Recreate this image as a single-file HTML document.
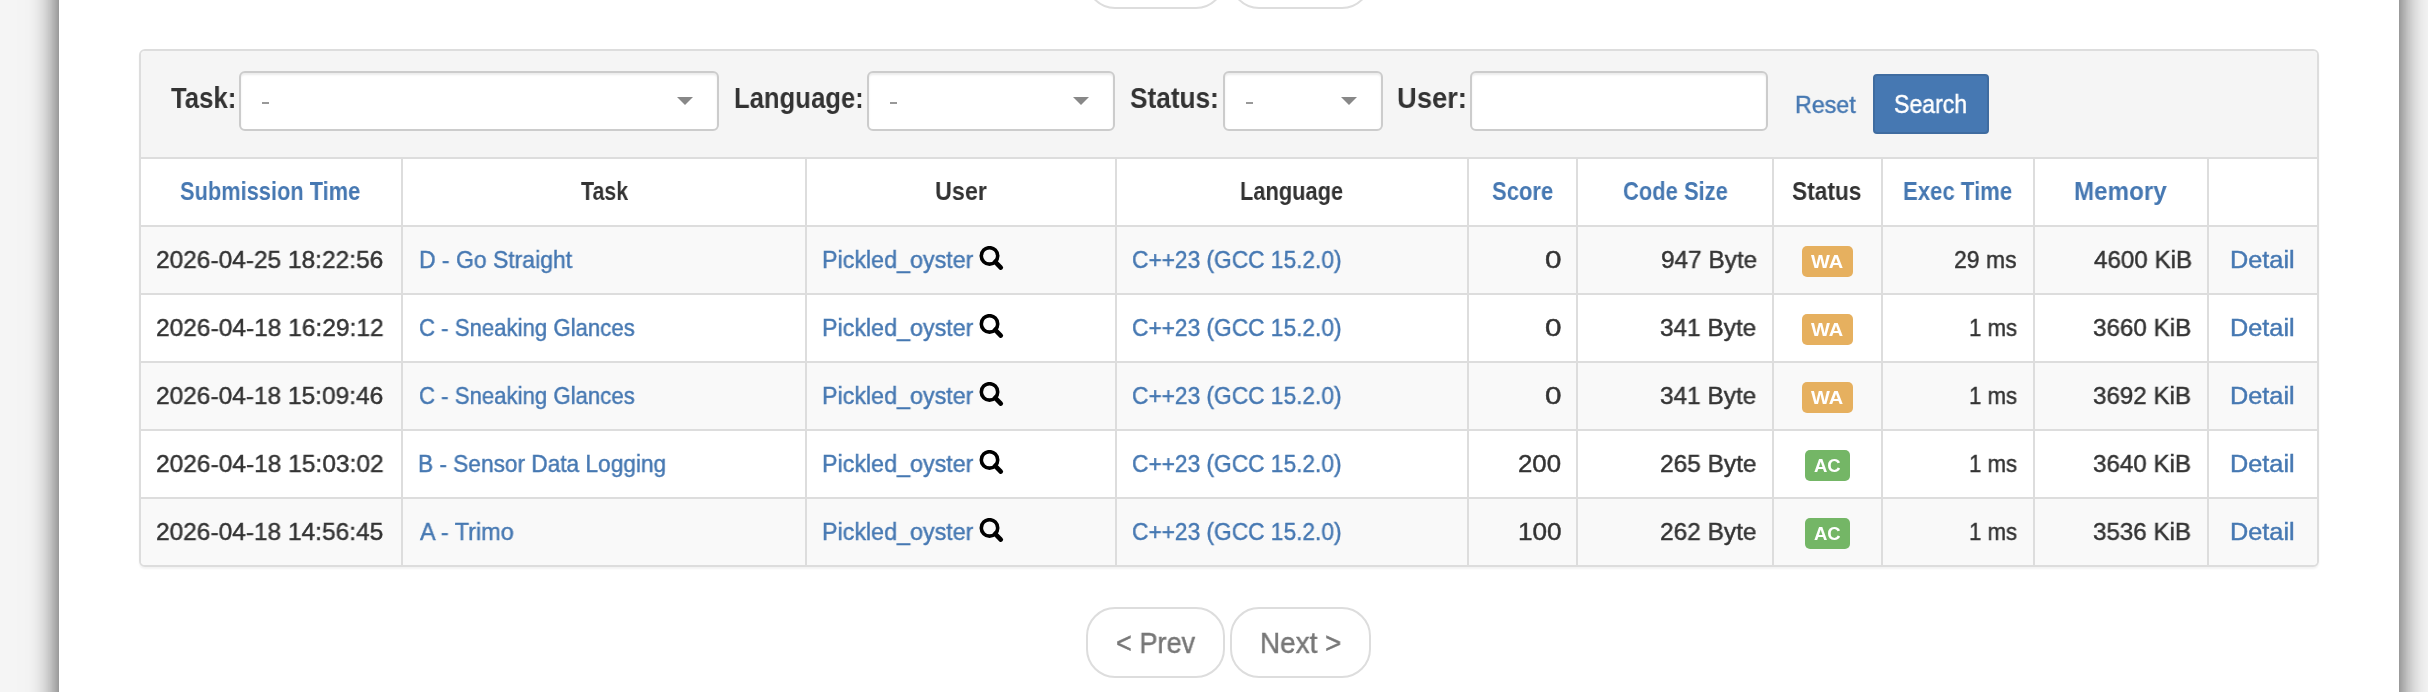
<!DOCTYPE html>
<html><head><meta charset="utf-8"><style>
html,body{margin:0;padding:0}
body{width:2428px;height:692px;overflow:hidden;position:relative;background:#f5f5f5;font-family:"Liberation Sans",sans-serif}
.cont{position:absolute;left:59px;top:-200px;width:2340px;height:1200px;background:#fff;box-shadow:0 0 28px rgba(0,0,0,0.75)}
.panel{position:absolute;left:139px;top:49px;width:2180px;height:518px;box-sizing:border-box;border:2px solid #ddd;border-radius:6px;background:#fff;box-shadow:0 2px 2px rgba(0,0,0,0.05);overflow:hidden}
.ph{position:absolute;left:0;top:0;right:0;height:106px;background:#f5f5f5}
.stripe{position:absolute;left:0;width:2176px;height:66px;background:#f9f9f9}
.stripe:last-of-type{}
.hl{position:absolute;left:0;width:2176px;height:2px;background:#ddd}
.vl{position:absolute;top:108px;width:2px;height:406px;background:#ddd}
.sel{position:absolute;top:71px;height:60px;box-sizing:border-box;border:2px solid #ccc;border-radius:6px;background:#fff;box-shadow:inset 0 2px 2px rgba(0,0,0,0.075)}
.arrow{position:absolute;top:97px;width:0;height:0;border-left:8px solid transparent;border-right:8px solid transparent;border-top:8px solid #888}
.dash{position:absolute;top:101.5px;width:7px;height:2.4px;background:#999}
.btn{position:absolute;left:1873px;top:74px;width:116px;height:60px;box-sizing:border-box;background:#4678b2;border:2px solid #3f6ca0;border-radius:4px}
.badge{position:absolute;height:31px;border-radius:5px}
.mag{position:absolute;left:979px}
.pgb{position:absolute;height:71px;box-sizing:border-box;border:2px solid #ddd;border-radius:29px;background:#fff}
.tx{position:absolute;white-space:nowrap;line-height:1;transform-origin:0 0;will-change:transform}
</style></head><body>
<div class="cont"></div>
<div class="pgb" style="left:1086px;top:-62px;width:139px"></div>
<div class="pgb" style="left:1230px;top:-62px;width:141px"></div>
<div class="panel"><div class="ph"></div><div class="stripe" style="top:176px"></div><div class="stripe" style="top:312px"></div><div class="stripe" style="top:448px"></div><div class="hl" style="top:106px"></div><div class="hl" style="top:174px"></div><div class="hl" style="top:242px"></div><div class="hl" style="top:310px"></div><div class="hl" style="top:378px"></div><div class="hl" style="top:446px"></div><div class="vl" style="left:260px"></div><div class="vl" style="left:664px"></div><div class="vl" style="left:974px"></div><div class="vl" style="left:1326px"></div><div class="vl" style="left:1435px"></div><div class="vl" style="left:1631px"></div><div class="vl" style="left:1740px"></div><div class="vl" style="left:1892px"></div><div class="vl" style="left:2066px"></div></div>
<div class="sel" style="left:239px;width:480px"></div>
<div class="arrow" style="left:677px"></div>
<div class="dash" style="left:262px"></div>
<div class="sel" style="left:867px;width:248px"></div>
<div class="arrow" style="left:1073px"></div>
<div class="dash" style="left:890px"></div>
<div class="sel" style="left:1223px;width:160px"></div>
<div class="arrow" style="left:1341px"></div>
<div class="dash" style="left:1246px"></div>
<div class="sel" style="left:1470px;width:298px"></div>
<div class="btn"></div>
<div class="badge" style="left:1802px;width:51px;top:246px;background:#e6b05f"></div>
<svg class="mag" style="top:246px" width="26" height="26" viewBox="0 0 26 26"><circle cx="10.5" cy="9.9" r="8.2" fill="none" stroke="#000" stroke-width="3.6"/><path d="M16.2 15.8 L21.8 21.6" stroke="#000" stroke-width="4.6" stroke-linecap="round"/></svg>
<div class="badge" style="left:1802px;width:51px;top:314px;background:#e6b05f"></div>
<svg class="mag" style="top:314px" width="26" height="26" viewBox="0 0 26 26"><circle cx="10.5" cy="9.9" r="8.2" fill="none" stroke="#000" stroke-width="3.6"/><path d="M16.2 15.8 L21.8 21.6" stroke="#000" stroke-width="4.6" stroke-linecap="round"/></svg>
<div class="badge" style="left:1802px;width:51px;top:382px;background:#e6b05f"></div>
<svg class="mag" style="top:382px" width="26" height="26" viewBox="0 0 26 26"><circle cx="10.5" cy="9.9" r="8.2" fill="none" stroke="#000" stroke-width="3.6"/><path d="M16.2 15.8 L21.8 21.6" stroke="#000" stroke-width="4.6" stroke-linecap="round"/></svg>
<div class="badge" style="left:1805px;width:45px;top:450px;background:#74b666"></div>
<svg class="mag" style="top:450px" width="26" height="26" viewBox="0 0 26 26"><circle cx="10.5" cy="9.9" r="8.2" fill="none" stroke="#000" stroke-width="3.6"/><path d="M16.2 15.8 L21.8 21.6" stroke="#000" stroke-width="4.6" stroke-linecap="round"/></svg>
<div class="badge" style="left:1805px;width:45px;top:518px;background:#74b666"></div>
<svg class="mag" style="top:518px" width="26" height="26" viewBox="0 0 26 26"><circle cx="10.5" cy="9.9" r="8.2" fill="none" stroke="#000" stroke-width="3.6"/><path d="M16.2 15.8 L21.8 21.6" stroke="#000" stroke-width="4.6" stroke-linecap="round"/></svg>
<div class="pgb" style="left:1086px;top:607px;width:139px"></div>
<div class="pgb" style="left:1230px;top:607px;width:141px"></div>
<span id="t0" class="tx" style="left:170.58px;top:83.00px;font-size:30.3px;font-weight:700;color:#333333;transform:scaleX(0.8493)">Task:</span>
<span id="t1" class="tx" style="left:733.84px;top:83.00px;font-size:30.3px;font-weight:700;color:#333333;transform:scaleX(0.8471)">Language:</span>
<span id="t2" class="tx" style="left:1129.90px;top:83.00px;font-size:30.3px;font-weight:700;color:#333333;transform:scaleX(0.8653)">Status:</span>
<span id="t3" class="tx" style="left:1397.06px;top:83.00px;font-size:30.3px;font-weight:700;color:#333333;transform:scaleX(0.9038)">User:</span>
<span id="t4" class="tx" style="left:1794.86px;top:93.00px;font-size:24.5px;font-weight:400;color:#4678b2;transform:scaleX(0.9485);-webkit-text-stroke:0.45px #4678b2">Reset</span>
<span id="t5" class="tx" style="left:1893.81px;top:92.00px;font-size:25px;font-weight:400;color:#ffffff;transform:scaleX(0.9226);-webkit-text-stroke:0.45px #ffffff">Search</span>
<span id="t6" class="tx" style="left:180.37px;top:179.00px;font-size:25px;font-weight:700;color:#4678b2;transform:scaleX(0.8722)">Submission Time</span>
<span id="t7" class="tx" style="left:580.57px;top:179.00px;font-size:25px;font-weight:700;color:#333333;transform:scaleX(0.8546)">Task</span>
<span id="t8" class="tx" style="left:934.59px;top:179.00px;font-size:25px;font-weight:700;color:#333333;transform:scaleX(0.9353)">User</span>
<span id="t9" class="tx" style="left:1240.18px;top:179.00px;font-size:25px;font-weight:700;color:#333333;transform:scaleX(0.8726)">Language</span>
<span id="t10" class="tx" style="left:1492.12px;top:179.00px;font-size:25px;font-weight:700;color:#4678b2;transform:scaleX(0.8816)">Score</span>
<span id="t11" class="tx" style="left:1622.73px;top:179.00px;font-size:25px;font-weight:700;color:#4678b2;transform:scaleX(0.8780)">Code Size</span>
<span id="t12" class="tx" style="left:1791.93px;top:179.00px;font-size:25px;font-weight:700;color:#333333;transform:scaleX(0.9082)">Status</span>
<span id="t13" class="tx" style="left:1903.34px;top:179.00px;font-size:25px;font-weight:700;color:#4678b2;transform:scaleX(0.8862)">Exec Time</span>
<span id="t14" class="tx" style="left:2074.20px;top:179.00px;font-size:25px;font-weight:700;color:#4678b2;transform:scaleX(0.9665)">Memory</span>
<span id="t15" class="tx" style="left:155.72px;top:248.00px;font-size:24.8px;font-weight:400;color:#333333;transform:scaleX(0.9867);-webkit-text-stroke:0.45px #333333">2026-04-25 18:22:56</span>
<span id="t16" class="tx" style="left:418.84px;top:248.00px;font-size:24.8px;font-weight:400;color:#4678b2;transform:scaleX(0.9254);-webkit-text-stroke:0.45px #4678b2">D - Go Straight</span>
<span id="t17" class="tx" style="left:822.22px;top:248.00px;font-size:24.8px;font-weight:400;color:#4678b2;transform:scaleX(0.9388);-webkit-text-stroke:0.45px #4678b2">Pickled_oyster</span>
<span id="t18" class="tx" style="left:1132.44px;top:248.00px;font-size:24.8px;font-weight:400;color:#4678b2;transform:scaleX(0.9159);-webkit-text-stroke:0.45px #4678b2">C++23 (GCC 15.2.0)</span>
<span id="t19" class="tx" style="left:1545.01px;top:248.00px;font-size:24.8px;font-weight:400;color:#333333;transform:scaleX(1.1933);-webkit-text-stroke:0.45px #333333">0</span>
<span id="t20" class="tx" style="left:1660.68px;top:248.00px;font-size:24.8px;font-weight:400;color:#333333;transform:scaleX(0.9827);-webkit-text-stroke:0.45px #333333">947 Byte</span>
<span id="t21" class="tx" style="left:1953.65px;top:248.00px;font-size:24.8px;font-weight:400;color:#333333;transform:scaleX(0.9256);-webkit-text-stroke:0.45px #333333">29 ms</span>
<span id="t22" class="tx" style="left:2093.51px;top:248.00px;font-size:24.8px;font-weight:400;color:#333333;transform:scaleX(0.9757);-webkit-text-stroke:0.45px #333333">4600 KiB</span>
<span id="t23" class="tx" style="left:2230.06px;top:248.00px;font-size:24.8px;font-weight:400;color:#4678b2;transform:scaleX(1.0193);-webkit-text-stroke:0.45px #4678b2">Detail</span>
<span id="t24" class="tx" style="left:1811.47px;top:253.00px;font-size:18.5px;font-weight:700;color:#ffffff;transform:scaleX(1.0799)">WA</span>
<span id="t25" class="tx" style="left:155.72px;top:316.00px;font-size:24.8px;font-weight:400;color:#333333;transform:scaleX(0.9884);-webkit-text-stroke:0.45px #333333">2026-04-18 16:29:12</span>
<span id="t26" class="tx" style="left:418.66px;top:316.00px;font-size:24.8px;font-weight:400;color:#4678b2;transform:scaleX(0.8947);-webkit-text-stroke:0.45px #4678b2">C - Sneaking Glances</span>
<span id="t27" class="tx" style="left:822.22px;top:316.00px;font-size:24.8px;font-weight:400;color:#4678b2;transform:scaleX(0.9388);-webkit-text-stroke:0.45px #4678b2">Pickled_oyster</span>
<span id="t28" class="tx" style="left:1132.44px;top:316.00px;font-size:24.8px;font-weight:400;color:#4678b2;transform:scaleX(0.9159);-webkit-text-stroke:0.45px #4678b2">C++23 (GCC 15.2.0)</span>
<span id="t29" class="tx" style="left:1545.01px;top:316.00px;font-size:24.8px;font-weight:400;color:#333333;transform:scaleX(1.1933);-webkit-text-stroke:0.45px #333333">0</span>
<span id="t30" class="tx" style="left:1660.23px;top:316.00px;font-size:24.8px;font-weight:400;color:#333333;transform:scaleX(0.9833);-webkit-text-stroke:0.45px #333333">341 Byte</span>
<span id="t31" class="tx" style="left:1968.78px;top:316.00px;font-size:24.8px;font-weight:400;color:#333333;transform:scaleX(0.8955);-webkit-text-stroke:0.45px #333333">1 ms</span>
<span id="t32" class="tx" style="left:2093.04px;top:316.00px;font-size:24.8px;font-weight:400;color:#333333;transform:scaleX(0.9771);-webkit-text-stroke:0.45px #333333">3660 KiB</span>
<span id="t33" class="tx" style="left:2230.06px;top:316.00px;font-size:24.8px;font-weight:400;color:#4678b2;transform:scaleX(1.0193);-webkit-text-stroke:0.45px #4678b2">Detail</span>
<span id="t34" class="tx" style="left:1811.47px;top:321.00px;font-size:18.5px;font-weight:700;color:#ffffff;transform:scaleX(1.0799)">WA</span>
<span id="t35" class="tx" style="left:155.72px;top:384.00px;font-size:24.8px;font-weight:400;color:#333333;transform:scaleX(0.9867);-webkit-text-stroke:0.45px #333333">2026-04-18 15:09:46</span>
<span id="t36" class="tx" style="left:418.66px;top:384.00px;font-size:24.8px;font-weight:400;color:#4678b2;transform:scaleX(0.8947);-webkit-text-stroke:0.45px #4678b2">C - Sneaking Glances</span>
<span id="t37" class="tx" style="left:822.22px;top:384.00px;font-size:24.8px;font-weight:400;color:#4678b2;transform:scaleX(0.9388);-webkit-text-stroke:0.45px #4678b2">Pickled_oyster</span>
<span id="t38" class="tx" style="left:1132.44px;top:384.00px;font-size:24.8px;font-weight:400;color:#4678b2;transform:scaleX(0.9159);-webkit-text-stroke:0.45px #4678b2">C++23 (GCC 15.2.0)</span>
<span id="t39" class="tx" style="left:1545.01px;top:384.00px;font-size:24.8px;font-weight:400;color:#333333;transform:scaleX(1.1933);-webkit-text-stroke:0.45px #333333">0</span>
<span id="t40" class="tx" style="left:1660.23px;top:384.00px;font-size:24.8px;font-weight:400;color:#333333;transform:scaleX(0.9833);-webkit-text-stroke:0.45px #333333">341 Byte</span>
<span id="t41" class="tx" style="left:1968.78px;top:384.00px;font-size:24.8px;font-weight:400;color:#333333;transform:scaleX(0.8955);-webkit-text-stroke:0.45px #333333">1 ms</span>
<span id="t42" class="tx" style="left:2093.45px;top:384.00px;font-size:24.8px;font-weight:400;color:#333333;transform:scaleX(0.9748);-webkit-text-stroke:0.45px #333333">3692 KiB</span>
<span id="t43" class="tx" style="left:2230.06px;top:384.00px;font-size:24.8px;font-weight:400;color:#4678b2;transform:scaleX(1.0193);-webkit-text-stroke:0.45px #4678b2">Detail</span>
<span id="t44" class="tx" style="left:1811.47px;top:389.00px;font-size:18.5px;font-weight:700;color:#ffffff;transform:scaleX(1.0799)">WA</span>
<span id="t45" class="tx" style="left:155.72px;top:452.00px;font-size:24.8px;font-weight:400;color:#333333;transform:scaleX(0.9884);-webkit-text-stroke:0.45px #333333">2026-04-18 15:03:02</span>
<span id="t46" class="tx" style="left:418.06px;top:452.00px;font-size:24.8px;font-weight:400;color:#4678b2;transform:scaleX(0.9136);-webkit-text-stroke:0.45px #4678b2">B - Sensor Data Logging</span>
<span id="t47" class="tx" style="left:822.22px;top:452.00px;font-size:24.8px;font-weight:400;color:#4678b2;transform:scaleX(0.9388);-webkit-text-stroke:0.45px #4678b2">Pickled_oyster</span>
<span id="t48" class="tx" style="left:1132.44px;top:452.00px;font-size:24.8px;font-weight:400;color:#4678b2;transform:scaleX(0.9159);-webkit-text-stroke:0.45px #4678b2">C++23 (GCC 15.2.0)</span>
<span id="t49" class="tx" style="left:1518.45px;top:452.00px;font-size:24.8px;font-weight:400;color:#333333;transform:scaleX(1.0386);-webkit-text-stroke:0.45px #333333">200</span>
<span id="t50" class="tx" style="left:1659.53px;top:452.00px;font-size:24.8px;font-weight:400;color:#333333;transform:scaleX(0.9862);-webkit-text-stroke:0.45px #333333">265 Byte</span>
<span id="t51" class="tx" style="left:1968.78px;top:452.00px;font-size:24.8px;font-weight:400;color:#333333;transform:scaleX(0.8955);-webkit-text-stroke:0.45px #333333">1 ms</span>
<span id="t52" class="tx" style="left:2093.45px;top:452.00px;font-size:24.8px;font-weight:400;color:#333333;transform:scaleX(0.9748);-webkit-text-stroke:0.45px #333333">3640 KiB</span>
<span id="t53" class="tx" style="left:2230.06px;top:452.00px;font-size:24.8px;font-weight:400;color:#4678b2;transform:scaleX(1.0193);-webkit-text-stroke:0.45px #4678b2">Detail</span>
<span id="t54" class="tx" style="left:1813.74px;top:457.00px;font-size:18.5px;font-weight:700;color:#ffffff;transform:scaleX(0.9921)">AC</span>
<span id="t55" class="tx" style="left:155.73px;top:520.00px;font-size:24.8px;font-weight:400;color:#333333;transform:scaleX(0.9868);-webkit-text-stroke:0.45px #333333">2026-04-18 14:56:45</span>
<span id="t56" class="tx" style="left:419.80px;top:520.00px;font-size:24.8px;font-weight:400;color:#4678b2;transform:scaleX(0.9445);-webkit-text-stroke:0.45px #4678b2">A - Trimo</span>
<span id="t57" class="tx" style="left:822.22px;top:520.00px;font-size:24.8px;font-weight:400;color:#4678b2;transform:scaleX(0.9388);-webkit-text-stroke:0.45px #4678b2">Pickled_oyster</span>
<span id="t58" class="tx" style="left:1132.44px;top:520.00px;font-size:24.8px;font-weight:400;color:#4678b2;transform:scaleX(0.9159);-webkit-text-stroke:0.45px #4678b2">C++23 (GCC 15.2.0)</span>
<span id="t59" class="tx" style="left:1517.83px;top:520.00px;font-size:24.8px;font-weight:400;color:#333333;transform:scaleX(1.0536);-webkit-text-stroke:0.45px #333333">100</span>
<span id="t60" class="tx" style="left:1659.53px;top:520.00px;font-size:24.8px;font-weight:400;color:#333333;transform:scaleX(0.9862);-webkit-text-stroke:0.45px #333333">262 Byte</span>
<span id="t61" class="tx" style="left:1968.78px;top:520.00px;font-size:24.8px;font-weight:400;color:#333333;transform:scaleX(0.8955);-webkit-text-stroke:0.45px #333333">1 ms</span>
<span id="t62" class="tx" style="left:2093.45px;top:520.00px;font-size:24.8px;font-weight:400;color:#333333;transform:scaleX(0.9748);-webkit-text-stroke:0.45px #333333">3536 KiB</span>
<span id="t63" class="tx" style="left:2230.06px;top:520.00px;font-size:24.8px;font-weight:400;color:#4678b2;transform:scaleX(1.0193);-webkit-text-stroke:0.45px #4678b2">Detail</span>
<span id="t64" class="tx" style="left:1813.74px;top:525.00px;font-size:18.5px;font-weight:700;color:#ffffff;transform:scaleX(0.9921)">AC</span>
<span id="t65" class="tx" style="left:1115.85px;top:628.00px;font-size:29.5px;font-weight:400;color:#777777;transform:scaleX(0.9198);-webkit-text-stroke:0.45px #777777">&lt; Prev</span>
<span id="t66" class="tx" style="left:1259.83px;top:628.00px;font-size:29.5px;font-weight:400;color:#777777;transform:scaleX(0.9451);-webkit-text-stroke:0.45px #777777">Next &gt;</span>
</body></html>
